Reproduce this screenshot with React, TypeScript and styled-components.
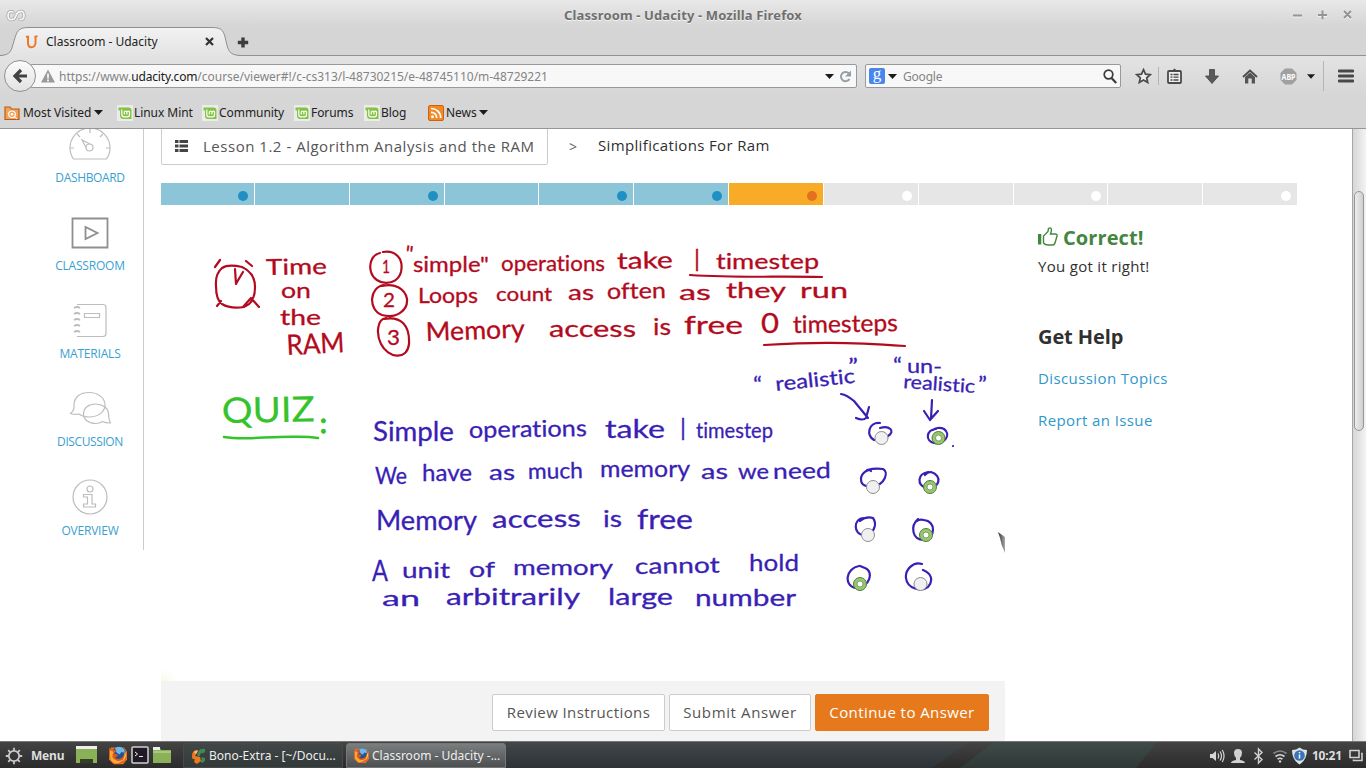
import React from 'react';
import styled, { createGlobalStyle } from 'styled-components';

const GlobalStyle = createGlobalStyle`
  *, *::before, *::after { box-sizing: border-box; }
  body { margin: 0; overflow: hidden; background: #fff; }
  svg { display: block; flex: none; }
`;

const Desktop = styled.div`
  width: 1366px;
  height: 768px;
  display: flex;
  flex-direction: column;
  overflow: hidden;
  font-family: 'Noto Sans', sans-serif;
  font-size: 12px;
  color: #222;
`;

/* ---------- window chrome ---------- */

const WindowTop = styled.header`
  height: 56px;
  flex: none;
  display: flex;
  flex-direction: column;
  background: linear-gradient(#e8e8e8 0, #d5d5d5 27px, #d5d5d5 100%);
  box-shadow: inset 0 -1px 0 #929292;
`;

const TitleBar = styled.div`
  height: 27px;
  display: grid;
  grid-template-columns: 120px 1fr 120px;
  align-items: center;
  padding: 2px 12px 0 6px;
`;

const WindowTitle = styled.h1`
  margin: 0;
  padding-left: 6px;
  text-align: center;
  font-size: 13px;
  line-height: 18px;
  letter-spacing: 0.13px;
  color: #6f6f6f;
  text-shadow: 0 1px 0 #f4f4f4;
`;

const WindowButtons = styled.div`
  display: flex;
  justify-content: flex-end;
`;

const TabStrip = styled.div`
  height: 29px;
  display: flex;
  align-items: stretch;
`;

const Tab = styled.div`
  position: relative;
  width: 236px;
  display: flex;
  align-items: center;
  padding-left: 25px;
`;

const TabShape = styled.svg`
  position: absolute;
  left: 0;
  top: 0;
`;

const TabContent = styled.div`
  position: relative;
  display: flex;
  align-items: center;
  width: 189px;
  span { margin-left: 8px; flex: 1; line-height: 16px; }
`;

const NewTab = styled.div`
  padding: 10px 0 0 1px;
`;

const NavBar = styled.nav`
  height: 40px;
  flex: none;
  display: flex;
  align-items: center;
  padding-left: 4px;
  background: linear-gradient(#e3e3e3, #d6d6d6);
`;

const BackButton = styled.div`
  position: relative;
  width: 32px;
  height: 32px;
  flex: none;
  border: 1px solid #8a9299;
  border-radius: 50%;
  background: linear-gradient(#fbfbfb, #e2e2e2);
  display: grid;
  place-items: center;
`;

const Field = styled.div<{ $w: number; $ml: number; $pl: number; $pr: number }>`
  width: ${p => p.$w}px;
  height: 24px;
  flex: none;
  margin-left: ${p => p.$ml}px;
  padding: 0 ${p => p.$pr}px 0 ${p => p.$pl}px;
  display: flex;
  align-items: center;
  border: 1px solid #999;
  border-radius: 2px;
  background: #f8f8f8;
  color: #848484;
`;

const Address = styled.span`
  flex: 1;
  margin: 2px 0 0 4px;
  line-height: 16px;
  white-space: nowrap;
  letter-spacing: -0.02px;
  b { font-weight: 400; color: #1a1a1a; letter-spacing: -0.15px; }
`;

const GoogleBadge = styled.span`
  width: 16px;
  height: 16px;
  border-radius: 2px;
  background: #4787ed;
  color: #fff;
  font: 400 17px/11px 'Liberation Serif', serif;
  text-align: center;
`;

const SearchText = styled.span`
  flex: 1;
  margin: 2px 0 0 3px;
  line-height: 16px;
  letter-spacing: -0.2px;
`;

const NavIcon = styled.div<{ $w: number; $pl?: number }>`
  width: ${p => p.$w}px;
  padding-left: ${p => p.$pl ?? 0}px;
  flex: none;
  display: flex;
  justify-content: center;
`;

const Separator = styled.div<{ $h: number }>`
  width: 1px;
  height: ${p => p.$h}px;
  background: #b0b5b9;
`;

const Bookmarks = styled.div`
  height: 33px;
  flex: none;
  display: flex;
  align-items: center;
  padding: 1px 0 0 4px;
  background: #d6d6d6;
  border-bottom: 1px solid #969696;
`;

const Bookmark = styled.div<{ $w: number; $gap?: number }>`
  width: ${p => p.$w}px;
  display: flex;
  align-items: center;
  gap: ${p => p.$gap ?? 1}px;
  line-height: 16px;
  white-space: nowrap;
  letter-spacing: -0.06px;
`;

/* ---------- page ---------- */

const Viewport = styled.div`
  height: 612px;
  flex: none;
  display: flex;
  overflow: hidden;
  background: #fff;
  font-family: 'Open Sans', sans-serif;
`;

const Sidebar = styled.aside`
  width: 107px;
  height: 424px;
  margin: -3px 17px 0 37px;
  flex: none;
  border-right: 1px solid #ccc;
`;

const SideItem = styled.a`
  height: 88.3px;
  display: flex;
  flex-direction: column;
  align-items: center;
  gap: 7.5px;
`;

const SideLabel = styled.span<{ $ls: number }>`
  line-height: 16px;
  font-size: 12px;
  letter-spacing: ${p => p.$ls}px;
  color: #3a9fd1;
`;

const Main = styled.main`
  width: 1191px;
  flex: none;
  display: flex;
  flex-direction: column;
`;

const Crumbs = styled.div`
  height: 38px;
  margin-top: -2px;
  flex: none;
  display: flex;
  align-items: center;
  font-size: 15px;
  color: #303030;
`;

const LessonButton = styled.div`
  width: 387px;
  height: 38px;
  padding-left: 13px;
  display: flex;
  align-items: center;
  gap: 15px;
  border: 1px solid #ccc;
  border-radius: 2px;
  color: #555;
  letter-spacing: 0.52px;
  white-space: nowrap;
`;

const Chevron = styled.span`
  width: 50px;
  text-align: center;
  color: #666;
  font-size: 14px;
`;

const CurrentCrumb = styled.span`
  padding-bottom: 2px;
  letter-spacing: 0.35px;
`;

const Progress = styled.div`
  width: 1136px;
  height: 22px;
  margin-top: 18px;
  flex: none;
  display: grid;
  grid-template-columns: 93px repeat(11, 1fr);
  gap: 1px;
`;

const tones = {
  done: ['#8cc4d8', '#1f8fc4'],
  now: ['#f8ab27', '#e2711f'],
  todo: ['#e6e6e6', '#fff'],
};

const Segment = styled.div<{ $tone: keyof typeof tones; $dot: boolean }>`
  display: flex;
  align-items: center;
  justify-content: flex-end;
  padding: 3px 6px 0 0;
  background: ${p => tones[p.$tone][0]};
  &::after {
    content: '';
    width: 10px;
    height: 10px;
    border-radius: 50%;
    background: ${p => (p.$dot ? tones[p.$tone][1] : 'transparent')};
  }
`;

const Columns = styled.div`
  flex: 1;
  display: flex;
`;

const Player = styled.section`
  width: 844px;
  flex: none;
  display: flex;
  flex-direction: column;
`;

const Actions = styled.div`
  height: 60px;
  flex: none;
  display: flex;
  justify-content: flex-end;
  align-items: flex-start;
  gap: 4px;
  padding: 13px 16px 0;
  background: #f3f3f3;
`;

const Button = styled.button<{ $primary?: boolean; $w: number; $ls: number }>`
  width: ${p => p.$w}px;
  height: 37px;
  padding: 0 0 2px;
  border: 1px solid ${p => (p.$primary ? '#e6791c' : '#ccc')};
  border-radius: 2px;
  background: ${p => (p.$primary ? '#e6791c' : '#fff')};
  color: ${p => (p.$primary ? '#fff' : '#555')};
  font: 400 15px 'Open Sans', sans-serif;
  letter-spacing: ${p => p.$ls}px;
  white-space: nowrap;
`;

const Feedback = styled.aside`
  padding: 20px 0 0 33px;
  font-size: 15px;
  line-height: 26px;
  color: #303030;
`;

const Verdict = styled.h2`
  margin: 0;
  height: 26px;
  display: flex;
  align-items: center;
  gap: 5px;
  font-size: 20px;
  letter-spacing: 0.1px;
  color: #43863f;
`;

const Message = styled.p`
  margin: 2px 0 0;
  letter-spacing: 0.3px;
`;

const HelpTitle = styled.h3`
  margin: 45px 0 0;
  font-size: 20px;
  line-height: 26px;
  letter-spacing: -0.1px;
`;

const HelpLinks = styled.div`
  margin-top: 15px;
  display: flex;
  flex-direction: column;
  gap: 16px;
`;

const HelpLink = styled.a`
  letter-spacing: 0.4px;
  color: #2f97cb;
`;

const ScrollTrack = styled.div`
  width: 14px;
  flex: none;
  padding: 62px 1px 0;
  border-left: 1px solid #a6a6a6;
  background: linear-gradient(90deg, #d6d6d6, #f3f3f3);
`;

const ScrollThumb = styled.div`
  width: 10px;
  height: 240px;
  border: 1px solid #969696;
  border-radius: 5px;
  background: linear-gradient(90deg, #ececec, #cfcfcf);
`;

/* ---------- taskbar ---------- */

const Taskbar = styled.footer`
  position: relative;
  height: 27px;
  flex: none;
  display: flex;
  align-items: center;
  padding: 1px 3px 0 5px;
  border-top: 1px solid #777;
  background: linear-gradient(#434343, #2b2b2b);
  color: #dedede;
`;

const TaskbarArt = styled.svg`
  position: absolute;
  left: 0;
  top: 0;
`;

const Launchers = styled.div`
  position: relative;
  width: 178px;
  display: flex;
  align-items: center;
`;

const MenuText = styled.b`
  margin: 0 12px 0 8px;
  line-height: 16px;
  letter-spacing: -0.2px;
`;

const Task = styled.div<{ $active?: boolean }>`
  position: relative;
  width: 160px;
  height: 25px;
  margin-right: 3px;
  padding-left: 7px;
  display: flex;
  align-items: center;
  gap: 3px;
  border: 1px solid ${p => (p.$active ? '#777' : '#454b4b')};
  border-radius: 3px 3px 0 0;
  background: ${p => (p.$active ? 'linear-gradient(#7b7e7f, #4d5051)' : 'linear-gradient(#414646, #333838)')};
  color: #eee;
  white-space: nowrap;
  line-height: 16px;
`;

const Tray = styled.div`
  position: relative;
  margin-left: auto;
  display: flex;
  align-items: center;
`;

const Clock = styled.b`
  margin: 0 7px 0 5px;
  line-height: 16px;
  letter-spacing: -0.15px;
`;

/* ---------- small drawings ---------- */

const Caret = ({ w = 9 }: { w?: number }) => (
  <svg width={w} height="5" viewBox="0 0 9 5"><path d="M0 0h9L4.500 5z" fill="#1c1c1c" /></svg>
);

const MintIcon = () => (
  <svg width="16" height="16" viewBox="0 0 16 16">
    <path d="M0 0h16v16H0z" fill="#ececec" />
    <path d="M1.500 2.500h10q3 0 3 3v8.500h-8q-3.500 0-3.500-3.500v-5h-1.500z" fill="#82c341" />
    <path d="M4.800 4.500v5q0 2.300 2.200 2.300h3.500q2 0 2-2V7.300q0-1.200-1.300-1.200t-1.300 1.200V9.500M9.900 7.300q0-1.200-1.300-1.200T7.300 7.300V9.500" fill="none" stroke="#fff" strokeWidth="1.200" />
  </svg>
);

const FirefoxIcon = ({ s }: { s: number }) => (
  <svg width={s} height={s} viewBox="0 0 18 18">
    <path d="M2 1h13l3 4v8l-4 5H5l-5-5V5z" fill="#e8762b" />
    <circle cx="10" cy="7" r="7" fill="#1f5596" />
    <path d="M6 1.500q5-3 9 1l1.500 4-4-1-2 2.500-3-2z" fill="#72b8e4" />
    <path d="M0 1q1 2.500 3 1.500 2.500 0 4.500 2.500-2.500.5-2 2.500l3.500.5q0 2-3 3 3 3 6.500.5Q16 9 15 4q3 4 2 8-3 6-9 5.500Q1 16 0 9z" fill="#e4581a" />
    <path d="M1 4q3 0 3.500 2-2.500 4 .5 6.500 4 3.500 9 .5-2 4-7 4-6-1-6-8z" fill="#f9a935" />
    <path d="M16 5q2 5-1 8.500l-2 1.500q3-4 3-10z" fill="#ffd75a" />
  </svg>
);

const SideIcon: Record<string, React.ReactNode> = {
  DASHBOARD: (
    <g stroke="#bdbdbd" strokeWidth="1.200">
      <path d="M4.500 33q-3.500-5-3.500-11a20 20 0 0 1 40 0q0 6-3.500 11z" />
      <path d="M21 3v4M8 8l3 3M34 8l-3 3M1 22h4M37 22h4" />
      <circle cx="20.500" cy="21.500" r="3.500" /><path d="M17 21.500l-4-7.500 8 4" />
    </g>
  ),
  CLASSROOM: (
    <g stroke="#8f8f8f" strokeWidth="1.800">
      <path d="M3.500 4.500h35v29h-35zM16.500 13v12l12-6z" />
    </g>
  ),
  MATERIALS: (
    <g stroke="#bdbdbd" strokeWidth="1.200">
      <path d="M8 1.500h26q3 0 3 3v26q0 3-3 3H8M15.500 10.500h15v4h-15z" />
      <path d="M5 5q3-2 6 0M5 11q3-2 6 0M5 17q3-2 6 0M5 23q3-2 6 0M5 29q3-2 6 0" strokeWidth="1.800" />
    </g>
  ),
  DISCUSSION: (
    <g stroke="#bdbdbd" strokeWidth="1.200">
      <path d="M1.500 22.500q4-3 3.500-8C5 6 11 1.500 20 1.500S36 7 36 14s-7 12-16 12q-6 0-10-3-4 1-8.500-.5z" />
      <path d="M14.500 23c0-6 5-10 12-10s13 4 13 10q0 5 2 9-5 0-8-1.500-3 2-7 2c-7 0-12-4-12-9.500z" />
    </g>
  ),
  OVERVIEW: (
    <g stroke="#bdbdbd" strokeWidth="1.200">
      <circle cx="21" cy="18" r="17" /><circle cx="21" cy="10" r="3" />
      <path d="M14.500 15.500h8.500v9.500h3.500v3h-12v-3h4V18h-4z" />
    </g>
  ),
};

/* ---------- whiteboard ---------- */

const Board = styled.svg`
  height: 476px;
  font-family: Lato, sans-serif;
  font-variant-ligatures: none;
`;

type Word = [text: string, x: number, y: number, w: number, size?: number, turn?: number];

const redWords: Word[] = [
  ['Time', 266, 275, 61, 22, -1], ['on', 281, 298, 30, 21], ['the', 280, 325, 41, 22], ['RAM', 287, 355, 58, 28, -3],
  ['1', 382, 273, 8, 18], ['2', 383, 307, 12, 20], ['3', 387, 345, 13, 22],
  ['"', 404, 261, 8, 22, 8], ['simple"', 413, 272, 76, 21], ['operations', 501, 271, 104, 21], ['take', 617, 269, 56, 23, -1],
  ['|', 694, 267, 6, 24], ['timestep', 716, 269, 103, 22],
  ['Loops', 418, 303, 60, 21], ['count', 496, 301, 56, 20], ['as', 568, 300, 26, 21], ['often', 607, 299, 59, 22, -1],
  ['as', 679, 300, 32, 21], ['they', 726, 298, 60, 22], ['run', 800, 298, 48, 22],
  ['Memory', 426, 341, 99, 26, -2], ['access', 549, 337, 87, 24], ['is', 653, 335, 18, 24], ['free', 684, 334, 59, 25],
  ['0', 761, 333, 18, 26], ['timesteps', 793, 333, 105, 24, -1],
];

const blueWords: Word[] = [
  ['Simple', 373, 441, 81, 26], ['operations', 469, 438, 118, 23, -1], ['take', 605, 438, 60, 25], ['|', 680, 436, 6, 24], ['timestep', 696, 438, 77, 22],
  ['We', 375, 484, 32, 23], ['have', 422, 481, 50, 23], ['as', 489, 480, 26, 22], ['much', 528, 479, 55, 22, -1],
  ['memory', 600, 477, 90, 23], ['as', 701, 479, 27, 22], ['we', 738, 479, 31, 22], ['need', 773, 479, 58, 22, -1],
  ['Memory', 376, 530, 101, 26], ['access', 492, 528, 89, 24, -1], ['is', 603, 527, 19, 23], ['free', 637, 529, 56, 26],
  ['A', 372, 581, 16, 29], ['unit', 402, 578, 48, 22], ['of', 469, 577, 26, 22], ['memory', 513, 575, 100, 22],
  ['cannot', 635, 574, 85, 22, -1], ['hold', 749, 571, 50, 24],
  ['an', 382, 606, 38, 22], ['arbitrarily', 446, 605, 134, 23], ['large', 608, 605, 65, 23], ['number', 695, 606, 101, 23],
  ['“', 753, 392, 9, 22], ['realistic', 776, 391, 80, 20, -6], ['”', 848, 374, 10, 22],
  ['“', 893, 373, 9, 22], ['un-', 907, 373, 35, 20], ['realistic', 903, 388, 72, 19, 4], ['”', 978, 392, 9, 21],
];

const Ink = ({ words, color }: { words: Word[]; color: string }) => (
  <g fill={color} stroke={color} strokeWidth=".3">
    {words.map(([text, x, y, w, size = 22, turn = 0]) => (
      <text key={`${x}-${y}`} x={x} y={y} fontSize={size} textLength={w} lengthAdjust="spacingAndGlyphs"
        transform={turn ? `rotate(${turn} ${x} ${y})` : undefined}>{text}</text>
    ))}
  </g>
);

const answers: [number, number, boolean][] = [
  [881.5, 438, false], [938.5, 438, true], [873, 487, false], [930, 487, true],
  [868, 535, false], [926, 535, true], [860, 584, true], [920.5, 584, false],
];

const Whiteboard = () => (
  <Board width="844" height="476" viewBox="161 205 844 476">
    <defs>
      <radialGradient id="tint" cx="0" cy="1" r="1"><stop stopColor="#f7faea" /><stop offset="1" stopColor="#fff" /></radialGradient>
      <linearGradient id="pen"><stop stopColor="#333" /><stop offset="1" stopColor="#aaa" /></linearGradient>
    </defs>
    <path d="M161 669h18v12h-18z" fill="url(#tint)" />
    <Ink words={redWords} color="#b30a20" />
    <Ink words={blueWords} color="#3a1fb5" />
    <g fill="#35c32b" stroke="#35c32b"><text x="222" y="423" fontSize="35" strokeWidth=".2" textLength="93" lengthAdjust="spacingAndGlyphs" transform="rotate(-1 222 423)">QUIZ</text><text x="320" y="433" fontSize="27" strokeWidth="1.500">:</text></g>
    <g fill="none" strokeLinecap="round" strokeLinejoin="round" strokeWidth="2.200">
      <path d="M224 437c20 3 40 0 56 0s25-1 38 1" stroke="#35c32b" strokeWidth="2.500" />
      <g stroke="#b30a20">
        <path d="M222 268q-7 6-6 18 0 14 6 18 8 5 22 3 11-4 11-20 0-14-13-20-14-3-20 1M235 269l1 15 1-2 6-10M215 267l5-7M246 261l6 5M217 306l4-5M243 307l8-9 8 9" />
        <path d="M380 253c-9 2-11 12-9 19 4 14 26 15 30 0 3-14-6-22-18-20M384 285c-15 2-16 25-2 30 15 4 26-5 25-16-2-11-13-16-25-13M386 318c-9 1-10 16-5 26 7 14 26 17 28 0 1-19-8-28-25-25" />
        <path d="M690 275c45 3 85 1 132 2M764 345c50-3 80-3 141 1" />
      </g>
      <g stroke="#3a1fb5">
        <path d="M841 394q6 1 13 7l14 17M856 418q7 3 10 0l3-11M932 400l-1 19M924 411l6 9 8-9" />
        <path d="M880 423c-12-1-14 13-6 17M880 428c9-3 16 3 8 8M936 429c-10 1-11 12-2 14 12 1 17-9 10-14-4-2-9-1-11 1" />
        <path d="M871 471c-2-3-10 2-10 8 0 7 6 8 12 7 12-1 16-14 10-17q-8-1-16 1M928 472c-11 2-11 13-2 16 14 2 17-13 5-16q-4 0-6 3" />
        <path d="M864 518c-11 0-11 17 0 17 9 0 14-10 9-17q-7-2-13 3M918 519c-8 7-6 21 6 21 12-2 12-19 0-20q-5-1-7 1" />
        <path d="M859 566c-13 2-16 20-3 22 14 0 18-17 9-20l-5-2M922 564c-9-3-17 6-16 14 1 11 16 14 22 9 6-7 3-14-5-17M953 446v.1" />
      </g>
    </g>
    {answers.map(([x, y, on]) => (
      <g key={`${x}-${y}`}>
        <circle cx={x} cy={y} r="6.500" fill={on ? '#97c76f' : '#f0f0f0'} stroke={on ? '#527b35' : '#8f8f8f'} />
        {on && <circle cx={x} cy={y} r="3" fill="#fff" stroke="#6a8f50" strokeWidth=".8" />}
      </g>
    ))}
    <path d="M998 532l7 5v16q-4-8-5-15z" fill="url(#pen)" />
  </Board>
);

const sideItems: [string, number][] = [
  ['DASHBOARD', -0.35], ['CLASSROOM', -0.2], ['MATERIALS', -0.2], ['DISCUSSION', -0.4], ['OVERVIEW', -0.2],
];

const segments: [keyof typeof tones, boolean][] = [
  ['done', true], ['done', false], ['done', true], ['done', false], ['done', true], ['done', true],
  ['now', true], ['todo', true], ['todo', false], ['todo', true], ['todo', false], ['todo', true],
];

export default function App() {
  return (
    <Desktop>
      <GlobalStyle />
      <WindowTop>
        <TitleBar>
          <svg width="20" height="14" viewBox="0 0 20 14"><g fill="none" strokeLinecap="round"><path d="M7 4Q2 2.500 2 7.500T6.500 11.500Q9 11 10 7.500T14.500 3.500 18 7.500 14 11.500" stroke="#a4a4a4" strokeWidth="3.200" /><path d="M7 4Q2 2.500 2 7.500T6.500 11.500Q9 11 10 7.500T14.500 3.500 18 7.500 14 11.500" stroke="#f5f5f5" strokeWidth="1.800" /></g></svg>
          <WindowTitle>Classroom - Udacity - Mozilla Firefox</WindowTitle>
          <WindowButtons>
            <svg width="62" height="12" viewBox="0 0 62 12"><g fill="none" strokeWidth="2"><path d="M1 7.500h9M26 7h9M30.500 2.500v9M52 3l7 7M59 3l-7 7" stroke="#f4f4f4" /><path d="M1 6.500h9M26 6h9M30.500 1.500v9M52 2l7 7M59 2l-7 7" stroke="#949494" /></g></svg>
          </WindowButtons>
        </TitleBar>
        <TabStrip>
          <Tab>
            <TabShape width="240" height="29" viewBox="0 27 240 29">
              <defs><linearGradient id="tab" x2="0" y2="1"><stop stopColor="#f2f2f2" /><stop offset="1" stopColor="#e3e3e3" /></linearGradient></defs>
              <path d="M0 55.500C11 55 11 51 14 41S18 27.500 29 27.500H212C223 27.500 224 32 226 41S229 55 240 55.500V56H0z" fill="url(#tab)" />
              <path d="M0 55.500C11 55 11 51 14 41S18 27.500 29 27.500H212C223 27.500 224 32 226 41S229 55 240 55.500" fill="none" stroke="#8e8e8e" />
            </TabShape>
            <TabContent>
              <svg width="13" height="14" viewBox="0 0 13 14"><path d="M1 1.800h3M3 1.500V8q0 4.300 3.500 4.300T10.500 8V1.500M9.500 2l3-.8" fill="none" stroke="#ee7323" strokeWidth="1.900" /></svg>
              <span>Classroom - Udacity</span>
              <svg width="9" height="9" viewBox="0 0 9 9"><path d="M1 1l7 7M8 1L1 8" stroke="#333" strokeWidth="2.200" /></svg>
            </TabContent>
          </Tab>
          <NewTab><svg width="12" height="11" viewBox="0 0 12 11"><path d="M4.300 .5h3.400v3.300h3.500v3.400H7.700v3.300H4.300V7.200H.8V3.800h3.500z" fill="#3c3c3c" /></svg></NewTab>
        </TabStrip>
      </WindowTop>

      <NavBar>
        <BackButton>
          <svg width="16" height="16" viewBox="0 0 16 16"><path d="M15 8H4M9 2L3 8l6 6" fill="none" stroke="#424242" strokeWidth="3.200" /></svg>
        </BackButton>
        <Field $w={827} $ml={-6} $pl={10} $pr={0}>
          <svg width="14" height="14" viewBox="0 0 14 14"><path d="M7 .5L14 13.500H0z" fill="#999" /><path d="M7 4.500v5M7 10.500v2" stroke="#fff" strokeWidth="1.600" /></svg>
          <Address>https://www.<b>udacity.com</b>/course/viewer#!/c-cs313/l-48730215/e-48745110/m-48729221</Address>
          <Caret />
          <NavIcon $w={22}><svg width="13" height="13" viewBox="0 0 13 13"><path d="M10.500 9A4.600 4.600 0 1 1 9.800 3.300" fill="none" stroke="#93a0a9" strokeWidth="2" /><path d="M12 .5v6H6z" fill="#93a0a9" /></svg></NavIcon>
        </Field>
        <Field $w={256} $ml={8} $pl={3} $pr={3}>
          <GoogleBadge>g</GoogleBadge>
          <NavIcon $w={15}><Caret /></NavIcon>
          <SearchText>Google</SearchText>
          <svg width="14" height="15" viewBox="0 0 14 15"><circle cx="5.500" cy="5.500" r="4.300" fill="none" stroke="#3b3b3b" strokeWidth="1.700" /><path d="M8.500 9l4.700 5" stroke="#3b3b3b" strokeWidth="2.200" /></svg>
        </Field>
        <NavIcon $w={37} $pl={7}><svg width="17" height="16" viewBox="0 0 17 16"><path d="M8.500 1.700l2 4.400 4.800.5-3.600 3.200 1 4.700-4.200-2.400-4.200 2.400 1-4.700L1.700 6.600l4.800-.5z" fill="#eee" stroke="#4a4a4a" strokeWidth="1.700" /></svg></NavIcon>
        <Separator $h={18} />
        <NavIcon $w={30}>
          <svg width="15" height="16" viewBox="0 0 15 16"><rect x="1" y="3" width="13" height="12" rx="1" fill="#eee" stroke="#4a4a4a" strokeWidth="1.800" /><path d="M4 3.500l3.500-3 3.500 3z" fill="#4a4a4a" /><path d="M3.500 6.500h2M6.500 6.500h5M3.500 9.200h2M6.500 9.200h5M3.500 12h2M6.500 12h5" stroke="#4a4a4a" strokeWidth="1.300" /></svg>
        </NavIcon>
        <NavIcon $w={46}><svg width="14" height="15" viewBox="0 0 14 15"><path d="M4.500.5h5v6.500h4L7 14.500.5 7h4z" fill="#5a5a5a" stroke="#444" strokeWidth=".8" /></svg></NavIcon>
        <NavIcon $w={30}><svg width="16" height="15" viewBox="0 0 16 15"><path d="M1 8l7-6.500L15 8" fill="none" stroke="#4b4b4b" strokeWidth="1.800" /><path d="M3 8l5-4.500L13 8v6.500H9.700V9.500H6.300v5H3z" fill="#555" /></svg></NavIcon>
        <NavIcon $w={42} $pl={4}>
          <svg width="17" height="17" viewBox="0 0 17 17"><path d="M5 .5h7L16.500 5v7L12 16.500H5L.5 12V5z" fill="#a0a0a0" /><text x="1.500" y="11.500" fill="#fff" fontSize="8" fontWeight="700" fontFamily="Noto Sans, sans-serif" textLength="14" lengthAdjust="spacingAndGlyphs">ABP</text></svg>
        </NavIcon>
        <Caret w={8} />
        <NavIcon $w={17}><Separator $h={30} /></NavIcon>
        <NavIcon $w={27}><svg width="16" height="14" viewBox="0 0 16 14"><path d="M1 2h14M1 7h14M1 12h14" stroke="#484848" strokeWidth="2.800" strokeLinecap="round" /></svg></NavIcon>
      </NavBar>

      <Bookmarks>
        <Bookmark $w={113} $gap={3}>
          <svg width="16" height="16" viewBox="0 0 16 16"><path d="M1 14.500V2h5l1.500 2h7.500v10.500z" fill="#f0a35c" stroke="#bd5a12" strokeWidth="1.200" /><circle cx="8" cy="9.300" r="3.300" fill="none" stroke="#fff" strokeWidth="1.200" /><circle cx="8" cy="9.300" r="1.300" fill="#fff" /><path d="M10.500 12l2.500 2" stroke="#fff" /></svg>
          Most Visited <Caret />
        </Bookmark>
        <Bookmark $w={85}><MintIcon />Linux Mint</Bookmark>
        <Bookmark $w={92}><MintIcon />Community</Bookmark>
        <Bookmark $w={70}><MintIcon />Forums</Bookmark>
        <Bookmark $w={64}><MintIcon />Blog</Bookmark>
        <Bookmark $w={70} $gap={2}>
          <svg width="16" height="16" viewBox="0 0 16 16"><rect x=".5" y=".5" width="15" height="15" rx="1.500" fill="#f08a24" stroke="#cf6010" /><circle cx="4.500" cy="11.800" r="1.500" fill="#fff" /><path d="M3 7.300a5.500 5.500 0 0 1 5.700 5.700M3 3.500A9.500 9.500 0 0 1 12.700 13" fill="none" stroke="#fff" strokeWidth="1.700" /></svg>
          News <Caret />
        </Bookmark>
      </Bookmarks>

      <Viewport>
        <Sidebar>
          {sideItems.map(([name, ls]) => (
            <SideItem key={name}>
              <svg width="42" height="36" viewBox="0 0 42 36" fill="none">{SideIcon[name]}</svg>
              <SideLabel $ls={ls}>{name}</SideLabel>
            </SideItem>
          ))}
        </Sidebar>
        <Main>
          <Crumbs>
            <LessonButton>
              <svg width="13" height="12" viewBox="0 0 13 12"><path d="M0 0h3.500v3H0zM4.500 0H13v3H4.500zM0 4.500h3.500v3H0zM4.500 4.500H13v3H4.500zM0 9h3.500v3H0zM4.500 9H13v3H4.500z" fill="#444" /></svg>
              Lesson 1.2 - Algorithm Analysis and the RAM
            </LessonButton>
            <Chevron>&gt;</Chevron>
            <CurrentCrumb>Simplifications For Ram</CurrentCrumb>
          </Crumbs>
          <Progress>
            {segments.map(([tone, dot], i) => <Segment key={i} $tone={tone} $dot={dot} />)}
          </Progress>
          <Columns>
            <Player>
              <Whiteboard />
              <Actions>
                <Button $w={173} $ls={0.4}>Review Instructions</Button>
                <Button $w={142} $ls={0.63}>Submit Answer</Button>
                <Button $w={174} $ls={0.42} $primary>Continue to Answer</Button>
              </Actions>
            </Player>
            <Feedback>
              <Verdict>
                <svg width="20" height="23" viewBox="0 0 20 23"><path d="M0 7h3.300v10.500H0z" fill="#43863f" /><path d="M5.500 9L10 4.500l.5-3q2-1.500 2.800.5.400 2-.8 5H17q2.500 0 2 2l-2 7q-.6 2-2.500 2H10q-3 0-4.500-2z" fill="none" stroke="#43863f" strokeWidth="1.400" /></svg>
                Correct!
              </Verdict>
              <Message>You got it right!</Message>
              <HelpTitle>Get Help</HelpTitle>
              <HelpLinks>
                <HelpLink>Discussion Topics</HelpLink>
                <HelpLink>Report an Issue</HelpLink>
              </HelpLinks>
            </Feedback>
          </Columns>
        </Main>
        <ScrollTrack><ScrollThumb /></ScrollTrack>
      </Viewport>

      <Taskbar>
        <TaskbarArt width="1366" height="26" viewBox="0 742 1366 26">
          <defs>
            <linearGradient id="slate" x2="0" y2="1"><stop stopColor="#42484a" /><stop offset="1" stopColor="#2c3235" /></linearGradient>
            <linearGradient id="moss" x2="0" y2="1"><stop stopColor="#3f4c49" /><stop offset="1" stopColor="#2e3836" /></linearGradient>
          </defs>
          <path d="M500 742H969L932 768H500z" fill="url(#slate)" />
          <path d="M994 742h163l-21 26H960z" fill="url(#moss)" />
        </TaskbarArt>
        <Launchers>
          <svg width="18" height="18" viewBox="0 0 18 18"><circle cx="9" cy="9" r="5.200" fill="none" stroke="#c9c9c9" strokeWidth="1.800" /><path d="M9 .8V3.500M9 14.500v2.700M.8 9h2.700M14.500 9h2.700M3.200 3.200l1.900 1.900M12.900 12.900l1.900 1.900M14.800 3.200l-1.900 1.900M5.100 12.900l-1.900 1.900" stroke="#c9c9c9" strokeWidth="1.800" /></svg>
          <MenuText>Menu</MenuText>
          <svg width="95" height="19" viewBox="0 0 95 19">
            <path d="M0 0h21v3H0z" fill="#eee" /><path d="M0 3h21v14h-4v-4H4v4H0z" fill="#8bb158" /><path d="M4 13h13v4H4z" fill="#334022" />
            <g transform="translate(33 .5)"><FirefoxIcon s={18} /></g>
            <rect x="56" y="1" width="16" height="16" rx="1" fill="#211a26" stroke="#d0d0d0" strokeWidth="1.500" /><path d="M59 6l2.500 2L59 10M63 10.500h4" fill="none" stroke="#eee" />
            <path d="M77 2h7l1 2h10v13H77z" fill="#8bb158" /><path d="M77 1h7v3h-7z" fill="#eee" /><path d="M77 5h18v2H77z" fill="#a8c880" />
          </svg>
        </Launchers>
        <Task>
          <svg width="15" height="16" viewBox="0 0 15 16"><path d="M1 8q0-5 4-6l2 1-3 5 5 1 1 4-4 3-3-2 1-3q-3 1-3-3z" fill="#f1771e" /><path d="M7 4q2-4 7-3v3q-2 2-4 1l-2 4q-3-1-1-5zM10 9l4 1q1 3-3 5l-2-2q3-1 1-4z" fill="#3d8a55" /><path d="M3 4l4-2-2 4z" fill="#ffc285" /></svg>
          Bono-Extra - [~/Docu...
        </Task>
        <Task $active><FirefoxIcon s={15} />Classroom - Udacity -...</Task>
        <Tray>
          <svg width="98" height="18" viewBox="1209 746 98 18">
            <path d="M1210 753h2.500l3.500-3v10l-3.500-3h-2.500z" fill="#d5d5d5" />
            <path d="M1218 752.500q1.500 2.500 0 5M1220 750.500q3 4.500 0 9M1222.300 749q3.500 6 0 12" fill="none" stroke="#d5d5d5" strokeWidth="1.200" />
            <path d="M1234 752q0-4 4-4t4 4q0 3-2 5v2q5 1 5 3h-14q0-2 5-3v-2q-2-2-2-5z" fill="#d0d0d0" />
            <path d="M1254.500 751.500l7.500 7-3.500 3.500v-14l3.500 3.500-7.500 7" fill="none" stroke="#d0d0d0" strokeWidth="1.400" />
            <path d="M1273.500 752.500q6.500-5 13 0" fill="none" stroke="#888" strokeWidth="1.600" />
            <path d="M1275.500 755.500q4.500-3.500 9 0M1277.500 758.200q2.500-2 5 0" fill="none" stroke="#d5d5d5" strokeWidth="1.600" /><circle cx="1280" cy="760.500" r="1.200" fill="#d5d5d5" />
            <path d="M1299.500 746.500q3 2.500 7.500 2.500 0 10-7.500 14.500-7.500-4.500-7.500-14.500 4.500 0 7.500-2.500z" fill="#dfe3e2" /><circle cx="1299.500" cy="754.500" r="5.300" fill="#3974b8" /><path d="M1299.500 753.500v4M1299.500 751v1.300" stroke="#fff" strokeWidth="1.500" />
          </svg>
          <Clock>10:21</Clock>
          <svg width="14" height="13" viewBox="0 0 14 13"><path d="M1 1.500h9v7H1zM12 4.500h1v7H4.500v-1" fill="none" stroke="#d0d0d0" strokeWidth="1.600" /></svg>
        </Tray>
      </Taskbar>
    </Desktop>
  );
}
